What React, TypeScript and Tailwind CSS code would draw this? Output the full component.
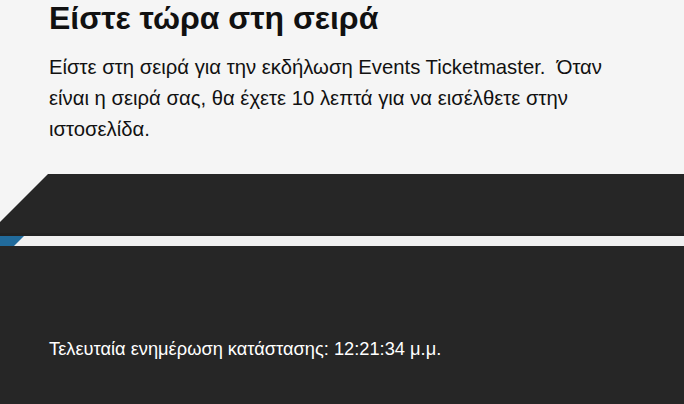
export default function App() {
  return (
    <div
      className="flex h-[404px] w-[684px] flex-col overflow-hidden bg-[#f5f5f5]"
      style={{ fontFamily: '"Liberation Sans", Arial, sans-serif' }}
    >
      {/* Intro */}
      <section className="h-[174px] px-[49px]">
        <h1 className="text-[32px] font-bold leading-[36px] text-[#111]">Είστε τώρα στη σειρά</h1>
        <p className="mt-[16px] text-[20.3px] leading-[31px] text-[#111]">
          Είστε στη σειρά για την εκδήλωση Events Ticketmaster.&nbsp; Όταν είναι η σειρά σας, θα έχετε 10 λεπτά για να εισέλθετε στην ιστοσελίδα.
        </p>
      </section>

      {/* Diagonal band */}
      <div className="h-[62px] bg-[#262626] [clip-path:polygon(48px_0,100%_0,100%_100%,0_100%,0_48px)]">
        <div className="mt-[59px] h-[3px] bg-[#222]" />
      </div>
      <div className="flex h-[10px] bg-[#f0f0f0]">
        <div className="h-full w-[24px] bg-[#216b9c] [clip-path:polygon(0_0,24px_0,14px_100%,0_100%)]" />
      </div>

      {/* Status */}
      <section className="flex-1 bg-[#262626] px-[49px] pt-[93px]">
        <p className="text-[18.25px] leading-[20px] text-white">
          Τελευταία ενημέρωση κατάστασης: 12:21:34 μ.μ.
        </p>
      </section>
    </div>
  );
}
